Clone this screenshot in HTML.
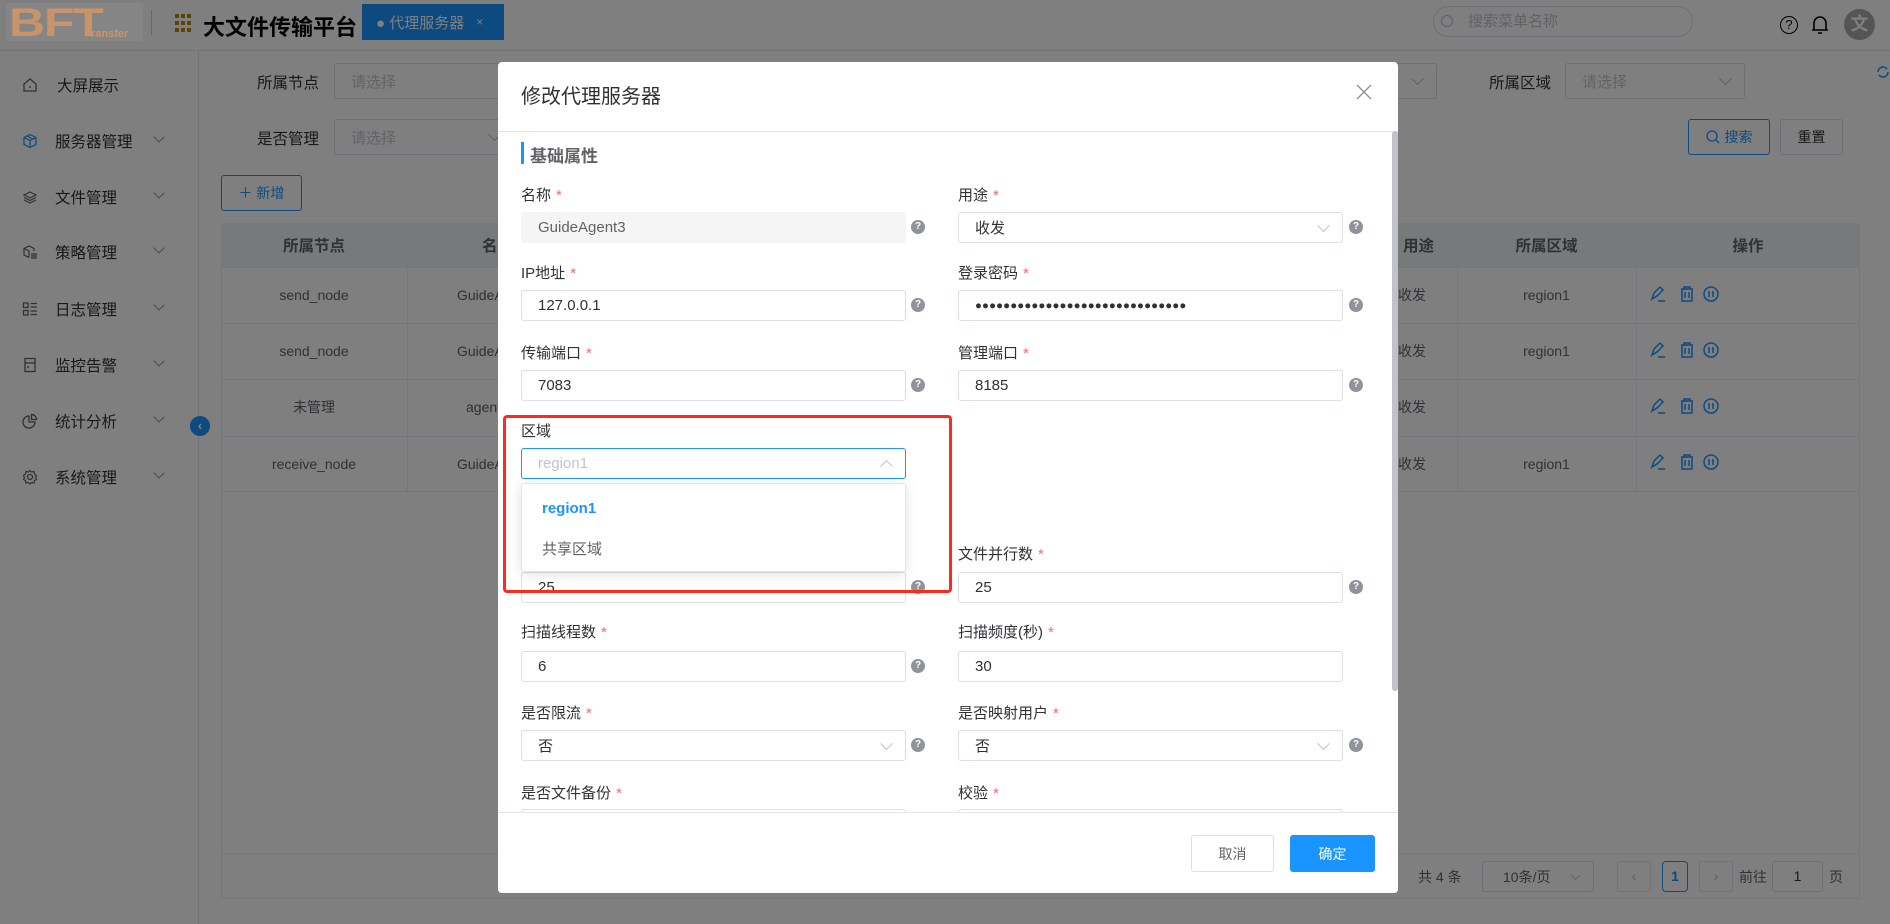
<!DOCTYPE html>
<html><head><meta charset="utf-8">
<style>
*{box-sizing:border-box;margin:0;padding:0}
body{width:1890px;height:924px;overflow:hidden;position:relative;background:#fff;font-family:"Liberation Sans","Noto Sans CJK SC",sans-serif;color:#303133;font-size:15px}
.a{position:absolute}
.sel{position:absolute;border:1px solid #dcdfe6;border-radius:3px;background:#fff;color:#c0c4cc;font-size:15px;padding-left:16px;display:flex;align-items:center}
.chev{position:absolute;right:14px;top:50%;width:9px;height:9px;border-right:1.3px solid #c0c4cc;border-bottom:1.3px solid #c0c4cc;transform:translateY(-75%) rotate(45deg)}
.mi{position:absolute;left:0;width:199px;height:40px;display:flex;align-items:center;font-size:15.5px;color:#303133}
.mi .ic{position:absolute;left:22px;width:16px;height:16px}
.mi .t{position:absolute;left:55px}
.mi .cv{position:absolute;left:155px;width:8px;height:8px;border-right:1.3px solid #909399;border-bottom:1.3px solid #909399;transform:rotate(45deg)}
.th{position:absolute;top:223px;height:44px;background:#eff2f6;color:#606266;font-weight:bold;font-size:15.5px;display:flex;align-items:center;justify-content:center}
.td{position:absolute;font-size:14px;color:#606266;height:56px;display:flex;align-items:center;justify-content:center}
.hl{position:absolute;height:1px;background:#ebeef5}
.vl{position:absolute;width:1px;background:#ebeef5}
.ov{position:absolute;left:0;top:0;width:1890px;height:924px;background:rgba(0,0,0,.5)}
.dlg{position:absolute;left:498px;top:62px;width:900px;height:831px;background:#fff;border-radius:4px;overflow:hidden}
.lbl{position:absolute;font-size:15px;color:#303133}
.lbl i{color:#f56c6c;font-style:normal;margin-left:5px}
.inp{position:absolute;height:31px;width:385px;border:1px solid #dcdfe6;border-radius:3px;background:#fff;font-size:15px;color:#303133;padding-left:16px;display:flex;align-items:center}
.q{position:absolute;width:14px;height:14px;border-radius:50%;background:#909399;color:#fff;font-size:10px;font-weight:bold;text-align:center;line-height:14px}
</style></head><body>
<!-- header -->
<div class="a" style="left:0;top:0;width:1890px;height:51px;background:#fff;border-bottom:1px solid #e6e6e6"></div>
<div class="a" style="left:151px;top:10px;width:1px;height:25px;background:#ccc"></div>
<svg class="a" style="left:175px;top:13px" width="17" height="22"><g fill="#b8860b"><rect x="0" y="1" width="4" height="4"/><rect x="6" y="1" width="4" height="4"/><rect x="12" y="1" width="4" height="4"/><rect x="0" y="8" width="4" height="4"/><rect x="6" y="8" width="4" height="4"/><rect x="12" y="8" width="4" height="4"/><rect x="0" y="15" width="4" height="4"/><rect x="6" y="15" width="4" height="4"/><rect x="12" y="15" width="4" height="4"/></g></svg>
<div class="a" style="left:203px;top:10px;font-size:22px;font-weight:bold;color:#000">大文件传输平台</div>
<div class="a" style="left:362px;top:4px;width:142px;height:36px;background:#1a94ff;color:#fff;font-size:15px;display:flex;align-items:center;padding-left:14px">● 代理服务器 <span style="font-size:12px;margin-left:12px">×</span></div>
<div class="a" style="left:1433px;top:6px;width:260px;height:31px;border:1px solid #dcdfe6;border-radius:16px;color:#c0c4cc;font-size:15px;padding-left:34px;line-height:29px">搜索菜单名称</div>
<div class="a" style="left:1441px;top:15px;width:12px;height:12px;border:1.4px solid #c0c4cc;border-radius:50%"></div>
<div class="a" style="left:1780px;top:16px;width:18px;height:18px;border:1.6px solid #000;border-radius:50%;font-size:13px;text-align:center;line-height:15px;color:#000">?</div>
<svg class="a" style="left:1811px;top:14px" width="18" height="22"><path d="M3 16 V9 a6 6 0 0 1 12 0 V16 Z M1 16 H17 M7 19 H11" fill="none" stroke="#000" stroke-width="1.6"/></svg>
<div class="a" style="left:1844px;top:9px;width:31px;height:31px;border-radius:50%;background:#aaa;color:#fff;font-weight:bold;font-size:18px;text-align:center;line-height:31px">文</div>
<!-- sidebar -->
<div class="a" style="left:0;top:51px;width:199px;height:873px;background:#fff;border-right:1px solid #e6e6e6"></div>
<div class="mi" style="top:65px"><svg class="ic" viewBox="0 0 16 16"><path d="M2 7 L8 2 L14 7 V14 H2 Z M8 9 V11" fill="none" stroke="#606266" stroke-width="1.3"/></svg><span class="t" style="left:57px">大屏展示</span></div>
<div class="mi" style="top:121px"><svg class="ic" viewBox="0 0 16 16"><path d="M8 1.5 L14 4.5 V11.5 L8 14.5 L2 11.5 V4.5 Z M2 4.5 L8 7.5 L14 4.5 M8 7.5 V14.5 M5 3 L11 6" fill="none" stroke="#1a94ff" stroke-width="1.2"/></svg><span class="t">服务器管理</span><span class="cv" style="top:12px"></span></div>
<div class="mi" style="top:177px"><svg class="ic" viewBox="0 0 16 16"><path d="M8 3 L14 6 L8 9 L2 6 Z M2 8.5 L8 11.5 L14 8.5 M2 11 L8 14 L14 11" fill="none" stroke="#606266" stroke-width="1.2"/></svg><span class="t">文件管理</span><span class="cv" style="top:12px"></span></div>
<div class="mi" style="top:232px"><svg class="ic" viewBox="0 0 16 16"><path d="M7 2 L12 4.5 V7 M7 2 L2 4.5 V11 L7 13.5 M2 4.5 L7 7 V13.5 M9 10 H15 M9 12 H15 M9 14 H15" fill="none" stroke="#606266" stroke-width="1.2"/></svg><span class="t">策略管理</span><span class="cv" style="top:12px"></span></div>
<div class="mi" style="top:289px"><svg class="ic" viewBox="0 0 16 16"><path d="M1.5 2 H6 V6.5 H1.5 Z M1.5 9.5 H6 V14 H1.5 Z M8.5 2.5 H15 M8.5 6 H15 M8.5 10 H15 M8.5 13.5 H15" fill="none" stroke="#606266" stroke-width="1.3"/></svg><span class="t">日志管理</span><span class="cv" style="top:12px"></span></div>
<div class="mi" style="top:345px"><svg class="ic" viewBox="0 0 16 16"><path d="M3 1.5 H13 V14.5 H3 Z M3 6 H13 M6 9 V11" fill="none" stroke="#606266" stroke-width="1.3"/></svg><span class="t">监控告警</span><span class="cv" style="top:12px"></span></div>
<div class="mi" style="top:401px"><svg class="ic" viewBox="0 0 16 16"><path d="M7 3 A6 6 0 1 0 13 9 H7 Z M9.5 1.5 A5 5 0 0 1 14.5 6.5 H9.5 Z" fill="none" stroke="#606266" stroke-width="1.3"/></svg><span class="t">统计分析</span><span class="cv" style="top:12px"></span></div>
<div class="mi" style="top:457px"><svg class="ic" viewBox="0 0 16 16"><circle cx="8" cy="8" r="2.5" fill="none" stroke="#606266" stroke-width="1.3"/><path d="M8 1.5 L9.5 3 L12 2.5 L12.5 5 L14.5 6.5 L13.5 8.5 L14.5 10.5 L12.5 11.5 L12 14 L9.5 13.5 L8 15 L6.5 13.5 L4 14 L3.5 11.5 L1.5 10.5 L2.5 8.5 L1.5 6.5 L3.5 5 L4 2.5 L6.5 3 Z" fill="none" stroke="#606266" stroke-width="1.2"/></svg><span class="t">系统管理</span><span class="cv" style="top:12px"></span></div>
<!-- filters -->
<div class="a" style="left:200px;top:52px;width:1690px;height:872px;background:#fff"></div>
<div class="a" style="left:190px;top:416px;width:20px;height:20px;border-radius:50%;background:#1a94ff;color:#fff;font-size:13px;text-align:center;line-height:19px;font-weight:bold">‹</div>
<div class="a" style="left:257px;top:71px;font-size:15.5px">所属节点</div>
<div class="sel" style="left:334px;top:63px;width:180px;height:36px">请选择</div>
<div class="a" style="left:257px;top:127px;font-size:15.5px">是否管理</div>
<div class="sel" style="left:334px;top:119px;width:180px;height:36px">请选择<span class="chev"></span></div>
<div class="sel" style="left:1350px;top:63px;width:87px;height:36px"><span class="chev"></span></div>
<div class="a" style="left:1489px;top:71px;font-size:15.5px">所属区域</div>
<div class="sel" style="left:1565px;top:63px;width:180px;height:36px">请选择<span class="chev"></span></div>
<svg class="a" style="left:1876px;top:65px" width="14" height="14"><path d="M2 7 A5 5 0 0 1 11 4 M12 7 A5 5 0 0 1 3 10" fill="none" stroke="#1a94ff" stroke-width="1.5"/></svg>
<div class="a" style="left:1688px;top:119px;width:82px;height:36px;border:1px solid #1a94ff;border-radius:3px;color:#1a94ff;font-size:14px;display:flex;align-items:center;justify-content:center"><svg width="14" height="14" style="margin-right:5px"><circle cx="6" cy="6" r="5" fill="none" stroke="#1a94ff" stroke-width="1.3"/><path d="M10 10 L13 13" stroke="#1a94ff" stroke-width="1.3"/></svg>搜索</div>
<div class="a" style="left:1780px;top:119px;width:63px;height:36px;border:1px solid #dcdfe6;border-radius:3px;color:#303133;font-size:14px;display:flex;align-items:center;justify-content:center">重置</div>
<div class="a" style="left:221px;top:175px;width:81px;height:36px;border:1px solid #1a94ff;border-radius:3px;color:#1a94ff;font-size:14px;display:flex;align-items:center;justify-content:center">＋ 新增</div>
<!-- table -->
<div class="a" style="left:221px;top:223px;width:1639px;height:676px;border:1px solid #ebeef5"></div>
<div class="th" style="left:221px;width:186px">所属节点</div>
<div class="th" style="left:407px;width:1050px;justify-content:flex-start;padding-left:75px">名称</div>
<div class="th" style="left:1380px;width:77px">用途</div>
<div class="th" style="left:1457px;width:179px">所属区域</div>
<div class="th" style="left:1636px;width:224px">操作</div>
<div class="hl" style="left:221px;top:267px;width:1639px"></div>
<div class="hl" style="left:221px;top:323px;width:1639px"></div>
<div class="hl" style="left:221px;top:379px;width:1639px"></div>
<div class="hl" style="left:221px;top:436px;width:1639px"></div>
<div class="hl" style="left:221px;top:491px;width:1639px"></div>
<div class="hl" style="left:221px;top:853px;width:1639px"></div>
<div class="vl" style="left:407px;top:223px;height:268px"></div>
<div class="vl" style="left:1457px;top:223px;height:268px"></div>
<div class="vl" style="left:1636px;top:223px;height:268px"></div>
<div class="td" style="left:221px;top:267px;width:186px">send_node</div>
<div class="td" style="left:221px;top:323px;width:186px">send_node</div>
<div class="td" style="left:221px;top:379px;width:186px">未管理</div>
<div class="td" style="left:221px;top:436px;width:186px">receive_node</div>
<div class="td" style="left:457px;top:267px">GuideAgent1</div>
<div class="td" style="left:457px;top:323px">GuideAgent2</div>
<div class="td" style="left:466px;top:379px">agent</div>
<div class="td" style="left:457px;top:436px">GuideAgent4</div>
<div class="td" style="left:1398px;top:267px">收发</div>
<div class="td" style="left:1398px;top:323px">收发</div>
<div class="td" style="left:1398px;top:379px">收发</div>
<div class="td" style="left:1398px;top:436px">收发</div>
<div class="td" style="left:1457px;top:267px;width:179px">region1</div>
<div class="td" style="left:1457px;top:323px;width:179px">region1</div>
<div class="td" style="left:1457px;top:436px;width:179px">region1</div>
<svg class="a" style="left:1650px;top:285px" width="80" height="200"><g fill="none" stroke="#1a94ff" stroke-width="1.5"><g id="o"><path d="M2 14 L4 8 L10 2 L13 5 L7 11 Z M8 16 H15"/><path d="M31 4 H43 M34 4 V2 H40 V4 M32 4 V16 H42 V4 M35 7 V13 M39 7 V13"/><circle cx="61" cy="9" r="7"/><path d="M59 6 V12 M63 6 V12"/></g><use href="#o" y="56"/><use href="#o" y="112"/><use href="#o" y="168"/></g></svg>
<!-- pagination -->
<div class="a" style="left:1418px;top:867px;font-size:14px;color:#606266">共 4 条</div>
<div class="sel" style="left:1482px;top:861px;width:112px;height:31px;color:#606266;font-size:14px;padding-left:20px">10条/页<span class="chev" style="width:7px;height:7px"></span></div>
<div class="a" style="left:1617px;top:861px;width:34px;height:31px;border:1px solid #e4e7ed;border-radius:3px;color:#c0c4cc;text-align:center;line-height:29px">‹</div>
<div class="a" style="left:1662px;top:861px;width:26px;height:31px;border:1px solid #1a94ff;border-radius:4px;color:#1a94ff;font-weight:bold;text-align:center;line-height:29px;font-size:14px">1</div>
<div class="a" style="left:1699px;top:861px;width:34px;height:31px;border:1px solid #e4e7ed;border-radius:3px;color:#c0c4cc;text-align:center;line-height:29px">›</div>
<div class="a" style="left:1739px;top:867px;font-size:14px;color:#606266">前往</div>
<div class="a" style="left:1772px;top:861px;width:51px;height:31px;border:1px solid #dcdfe6;border-radius:3px;text-align:center;line-height:29px;font-size:14px">1</div>
<div class="a" style="left:1829px;top:867px;font-size:14px;color:#606266">页</div>

<div class="ov"></div>
<!-- logo above overlay -->
<div class="a" style="left:6px;top:3px;width:137px;height:38px;background:#858585"></div>
<div class="a" style="left:9px;top:3px;font-size:40px;font-weight:900;color:#c9946a;font-family:'Liberation Sans',sans-serif;line-height:40px;transform:scaleX(1.25);transform-origin:left top;letter-spacing:-1px">BFT</div>
<div class="a" style="left:91px;top:28px;font-size:11px;font-weight:bold;color:#c9946a">ransfer</div>

<!-- dialog -->
<div class="dlg">
  <div class="a" style="left:23px;top:18px;font-size:20px;color:#303133">修改代理服务器</div>
  <svg class="a" style="left:858px;top:22px" width="16" height="16"><path d="M1 1 L15 15 M15 1 L1 15" stroke="#909399" stroke-width="1.4"/></svg>
  <div class="a" style="left:0;top:69px;width:900px;height:1px;background:#e4e7ed"></div>
  <div class="a" style="left:894px;top:69px;width:6px;height:560px;background:#c1c1c9;border-radius:3px"></div>
  <div class="a" style="left:23px;top:80px;width:3px;height:22px;background:#1a94ff"></div>
  <div class="a" style="left:32px;top:80px;font-size:17px;font-weight:bold;color:#606266">基础属性</div>

  <div class="lbl" style="left:23px;top:122px">名称<i>*</i></div>
  <div class="inp" style="left:23px;top:150px;background:#f5f5f5;border-color:#f5f5f5;color:#606266">GuideAgent3</div>
  <div class="q" style="left:413px;top:158px">?</div>
  <div class="lbl" style="left:460px;top:122px">用途<i>*</i></div>
  <div class="inp" style="left:460px;top:150px">收发<span class="chev"></span></div>
  <div class="q" style="left:851px;top:158px">?</div>

  <div class="lbl" style="left:23px;top:200px">IP地址<i>*</i></div>
  <div class="inp" style="left:23px;top:228px">127.0.0.1</div>
  <div class="q" style="left:413px;top:236px">?</div>
  <div class="lbl" style="left:460px;top:200px">登录密码<i>*</i></div>
  <div class="inp" style="left:460px;top:228px;font-size:11.5px;letter-spacing:0.1px">●●●●●●●●●●●●●●●●●●●●●●●●●●●●●●</div>
  <div class="q" style="left:851px;top:236px">?</div>

  <div class="lbl" style="left:23px;top:280px">传输端口<i>*</i></div>
  <div class="inp" style="left:23px;top:308px">7083</div>
  <div class="q" style="left:413px;top:316px">?</div>
  <div class="lbl" style="left:460px;top:280px">管理端口<i>*</i></div>
  <div class="inp" style="left:460px;top:308px">8185</div>
  <div class="q" style="left:851px;top:316px">?</div>

  <div class="lbl" style="left:23px;top:358px">区域</div>
  <div class="inp" style="left:23px;top:386px;border-color:#1a94ff;color:#c0c4cc">region1<span class="chev" style="transform:translateY(-25%) rotate(225deg)"></span></div>

  <div class="lbl" style="left:460px;top:481px">文件并行数<i>*</i></div>
  <div class="inp" style="left:23px;top:510px">25</div>
  <div class="q" style="left:413px;top:518px">?</div>
  <div class="inp" style="left:460px;top:510px">25</div>
  <div class="q" style="left:851px;top:518px">?</div>

  <div class="a" style="left:23px;top:421px;width:385px;height:89px;background:#fff;border:1px solid #e4e7ed;border-radius:3px;box-shadow:0 2px 12px rgba(0,0,0,.12)"></div>
  <div class="a" style="left:44px;top:438px;font-size:15px;font-weight:bold;color:#1a94ff">region1</div>
  <div class="a" style="left:44px;top:476px;font-size:15px;color:#606266">共享区域</div>
  <div class="a" style="left:5px;top:353px;width:449px;height:178px;border:3px solid #ff2a1f;border-radius:4px"></div>

  <div class="lbl" style="left:23px;top:559px">扫描线程数<i>*</i></div>
  <div class="inp" style="left:23px;top:589px">6</div>
  <div class="q" style="left:413px;top:597px">?</div>
  <div class="lbl" style="left:460px;top:559px">扫描频度(秒)<i>*</i></div>
  <div class="inp" style="left:460px;top:589px">30</div>

  <div class="lbl" style="left:23px;top:640px">是否限流<i>*</i></div>
  <div class="inp" style="left:23px;top:668px">否<span class="chev"></span></div>
  <div class="q" style="left:413px;top:676px">?</div>
  <div class="lbl" style="left:460px;top:640px">是否映射用户<i>*</i></div>
  <div class="inp" style="left:460px;top:668px">否<span class="chev"></span></div>
  <div class="q" style="left:851px;top:676px">?</div>

  <div class="lbl" style="left:23px;top:720px">是否文件备份<i>*</i></div>
  <div class="lbl" style="left:460px;top:720px">校验<i>*</i></div>
  <div class="inp" style="left:23px;top:747px"></div>
  <div class="inp" style="left:460px;top:747px"></div>
  <div class="a" style="left:0;top:750px;width:900px;height:81px;background:#fff;border-top:1px solid #e4e7ed"></div>
  <div class="a" style="left:693px;top:773px;width:83px;height:37px;border:1px solid #dcdfe6;border-radius:3px;color:#606266;font-size:14px;display:flex;align-items:center;justify-content:center">取消</div>
  <div class="a" style="left:792px;top:773px;width:85px;height:37px;background:#1a94ff;border-radius:3px;color:#fff;font-size:14px;display:flex;align-items:center;justify-content:center">确定</div>
</div>
</body></html>
